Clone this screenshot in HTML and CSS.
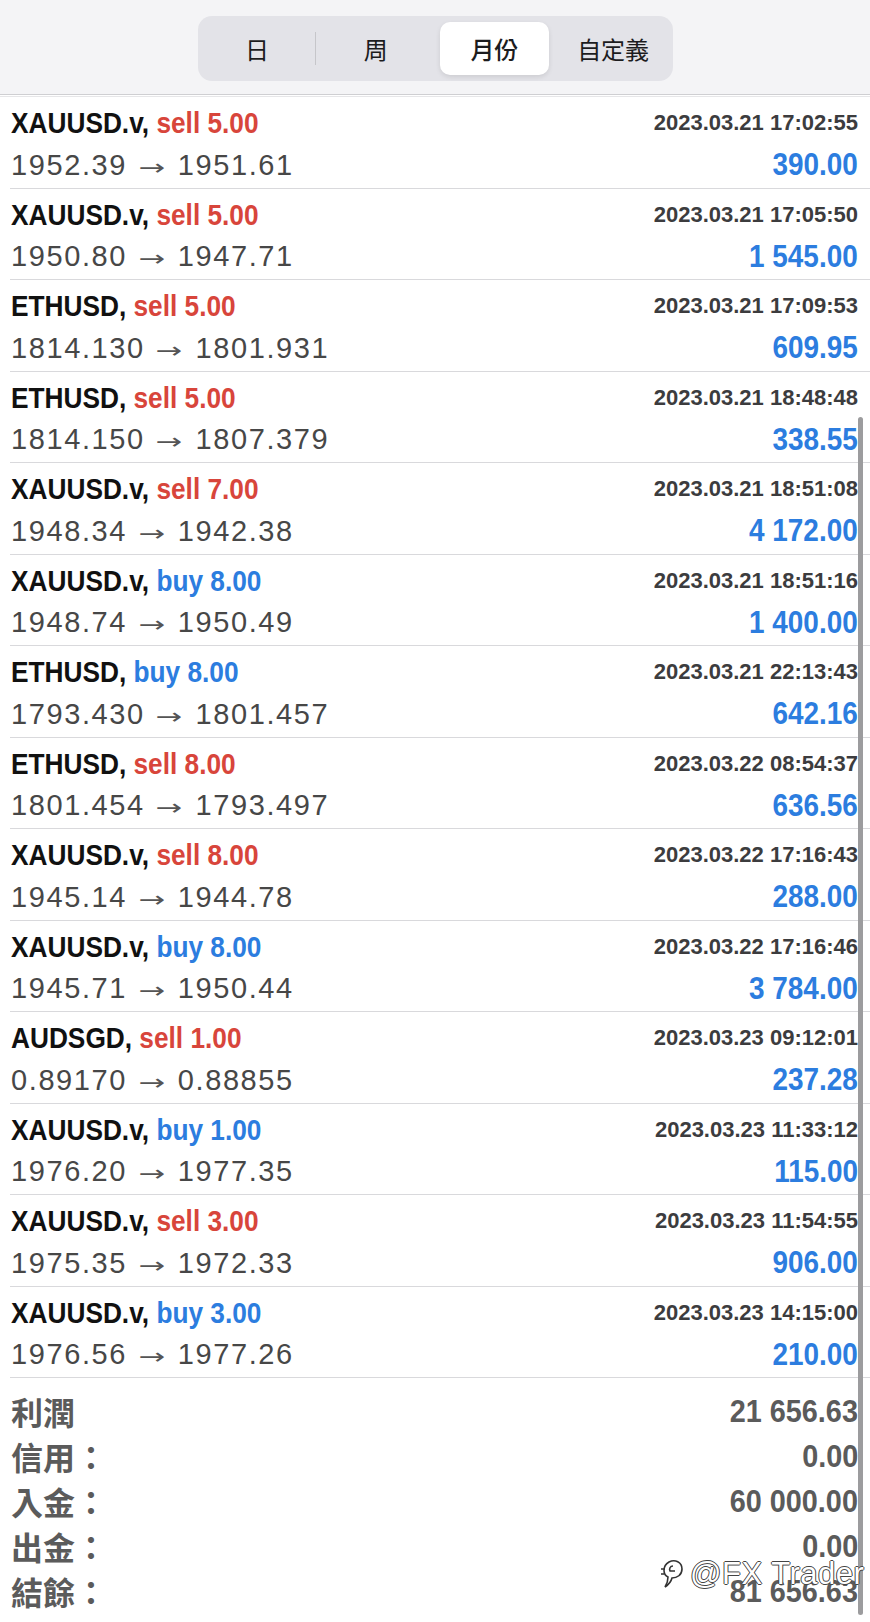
FILE: index.html
```html
<!DOCTYPE html>
<html>
<head>
    <title>交易歷史</title>
    <link rel="stylesheet" href="styles.css">
</head>
<body>
<div class="screen">
    <header class="topbar">
        <div class="segmented">
            <div class="segment">日</div>
            <div class="segment">周</div>
            <div class="segment active">月份</div>
            <div class="segment">自定義</div>
        </div>
    </header>

    <main class="deals">
        <div class="deal">
            <div class="line"><span class="symbol">XAUUSD.v, <span class="sell">sell 5.00</span></span><span class="time">2023.03.21 17:02:55</span></div>
            <div class="line"><span class="prices">1952.39 <span class="arrow">→</span> 1951.61</span><span class="profit">390.00</span></div>
        </div>
        <div class="deal">
            <div class="line"><span class="symbol">XAUUSD.v, <span class="sell">sell 5.00</span></span><span class="time">2023.03.21 17:05:50</span></div>
            <div class="line"><span class="prices">1950.80 <span class="arrow">→</span> 1947.71</span><span class="profit">1&nbsp;545.00</span></div>
        </div>
        <div class="deal">
            <div class="line"><span class="symbol">ETHUSD, <span class="sell">sell 5.00</span></span><span class="time">2023.03.21 17:09:53</span></div>
            <div class="line"><span class="prices">1814.130 <span class="arrow">→</span> 1801.931</span><span class="profit">609.95</span></div>
        </div>
        <div class="deal">
            <div class="line"><span class="symbol">ETHUSD, <span class="sell">sell 5.00</span></span><span class="time">2023.03.21 18:48:48</span></div>
            <div class="line"><span class="prices">1814.150 <span class="arrow">→</span> 1807.379</span><span class="profit">338.55</span></div>
        </div>
        <div class="deal">
            <div class="line"><span class="symbol">XAUUSD.v, <span class="sell">sell 7.00</span></span><span class="time">2023.03.21 18:51:08</span></div>
            <div class="line"><span class="prices">1948.34 <span class="arrow">→</span> 1942.38</span><span class="profit">4&nbsp;172.00</span></div>
        </div>
        <div class="deal">
            <div class="line"><span class="symbol">XAUUSD.v, <span class="buy">buy 8.00</span></span><span class="time">2023.03.21 18:51:16</span></div>
            <div class="line"><span class="prices">1948.74 <span class="arrow">→</span> 1950.49</span><span class="profit">1&nbsp;400.00</span></div>
        </div>
        <div class="deal">
            <div class="line"><span class="symbol">ETHUSD, <span class="buy">buy 8.00</span></span><span class="time">2023.03.21 22:13:43</span></div>
            <div class="line"><span class="prices">1793.430 <span class="arrow">→</span> 1801.457</span><span class="profit">642.16</span></div>
        </div>
        <div class="deal">
            <div class="line"><span class="symbol">ETHUSD, <span class="sell">sell 8.00</span></span><span class="time">2023.03.22 08:54:37</span></div>
            <div class="line"><span class="prices">1801.454 <span class="arrow">→</span> 1793.497</span><span class="profit">636.56</span></div>
        </div>
        <div class="deal">
            <div class="line"><span class="symbol">XAUUSD.v, <span class="sell">sell 8.00</span></span><span class="time">2023.03.22 17:16:43</span></div>
            <div class="line"><span class="prices">1945.14 <span class="arrow">→</span> 1944.78</span><span class="profit">288.00</span></div>
        </div>
        <div class="deal">
            <div class="line"><span class="symbol">XAUUSD.v, <span class="buy">buy 8.00</span></span><span class="time">2023.03.22 17:16:46</span></div>
            <div class="line"><span class="prices">1945.71 <span class="arrow">→</span> 1950.44</span><span class="profit">3&nbsp;784.00</span></div>
        </div>
        <div class="deal">
            <div class="line"><span class="symbol">AUDSGD, <span class="sell">sell 1.00</span></span><span class="time">2023.03.23 09:12:01</span></div>
            <div class="line"><span class="prices">0.89170 <span class="arrow">→</span> 0.88855</span><span class="profit">237.28</span></div>
        </div>
        <div class="deal">
            <div class="line"><span class="symbol">XAUUSD.v, <span class="buy">buy 1.00</span></span><span class="time">2023.03.23 11:33:12</span></div>
            <div class="line"><span class="prices">1976.20 <span class="arrow">→</span> 1977.35</span><span class="profit">115.00</span></div>
        </div>
        <div class="deal">
            <div class="line"><span class="symbol">XAUUSD.v, <span class="sell">sell 3.00</span></span><span class="time">2023.03.23 11:54:55</span></div>
            <div class="line"><span class="prices">1975.35 <span class="arrow">→</span> 1972.33</span><span class="profit">906.00</span></div>
        </div>
        <div class="deal">
            <div class="line"><span class="symbol">XAUUSD.v, <span class="buy">buy 3.00</span></span><span class="time">2023.03.23 14:15:00</span></div>
            <div class="line"><span class="prices">1976.56 <span class="arrow">→</span> 1977.26</span><span class="profit">210.00</span></div>
        </div>

        <div class="summary">
            <div class="sum-row"><span class="sum-label">利潤</span><span class="sum-value">21&nbsp;656.63</span></div>
            <div class="sum-row"><span class="sum-label">信用：</span><span class="sum-value">0.00</span></div>
            <div class="sum-row"><span class="sum-label">入金：</span><span class="sum-value">60&nbsp;000.00</span></div>
            <div class="sum-row"><span class="sum-label">出金：</span><span class="sum-value">0.00</span></div>
            <div class="sum-row"><span class="sum-label">結餘：</span><span class="sum-value">81&nbsp;656.63</span></div>
        </div>
    </main>

    <div class="scrollbar"></div>

    <div class="watermark">
        <svg class="wm-logo" viewBox="0 0 24 32" width="24" height="32">
            <path d="M9 4 C15 1 22 4 22 11 C22 17 17 20 12 20 C11 24 8 27 5 29 C7 26 8 22 8 19 C3 17 2 8 9 4 Z" fill="#fff" stroke="#333" stroke-width="1.6"/>
            <path d="M13 8 C10 8 9 11 10 13 L15 13" fill="none" stroke="#333" stroke-width="1.6"/>
            <path d="M1 11 L5 11 M1 16 L4 16" stroke="#333" stroke-width="1.4"/>
        </svg>
        <span class="wm-text">@FX Trader</span>
    </div>
</div>
</body>
</html>
```

FILE: styles.css
```css
:root {
    --header-bg: #f4f4f6;
    --segment-bg: #e3e3e8;
    --divider-color: #d9d9dc;
    --title-color: #111111;
    --price-color: #474747;
    --time-color: #3c3c3e;
    --sell-color: #d8453b;
    --buy-color: #2c7ddf;
    --summary-color: #5b5b5b;
}

body {
    margin: 0;
    background: #ffffff;
    font-family: "Liberation Sans", Arial, sans-serif;
}

.screen {
    position: relative;
    width: 870px;
    height: 1622px;
    overflow: hidden;
    background: #ffffff;
}

.topbar {
    height: 95px;
    background: var(--header-bg);
    border-bottom: 1px solid #cfcfd2;
    box-sizing: border-box;
    padding-top: 16px;
    display: flex;
    justify-content: center;
}

.segmented {
    width: 475px;
    height: 65px;
    padding: 6px 5px;
    box-sizing: border-box;
    background: var(--segment-bg);
    border-radius: 14px;
    display: grid;
    grid-template-columns: repeat(4, 1fr);
    column-gap: 10px;
}

.segment {
    position: relative;
    display: flex;
    align-items: center;
    justify-content: center;
    font-family: "Noto Sans CJK TC", "Noto Sans CJK SC", sans-serif;
    font-size: 24px;
    color: #1c1c1e;
    border-radius: 10px;
}

.segment:first-child::after {
    content: "";
    position: absolute;
    right: -5px;
    top: 10px;
    bottom: 10px;
    width: 1px;
    background: #c6c6ca;
}

.segment.active {
    background: #ffffff;
    font-weight: 500;
    box-shadow: 0 2px 5px rgba(0, 0, 0, 0.1);
}

.deals {
    margin-top: 1px;
    border-top: 1px solid #e6e6e8;
}

.deal {
    margin-left: 10px;
    padding: 5px 12px 1.5px 1px;
    border-bottom: 1px solid var(--divider-color);
}

.line {
    display: flex;
    justify-content: space-between;
    align-items: center;
    height: 42px;
}

.symbol {
    display: inline-block;
    font-weight: 700;
    font-size: 30px;
    color: var(--title-color);
    transform: scaleX(0.875);
    transform-origin: left center;
    white-space: nowrap;
}

.sell { color: var(--sell-color); }
.buy { color: var(--buy-color); }

.time {
    font-weight: 700;
    font-size: 22px;
    color: var(--time-color);
}

.prices {
    font-size: 29px;
    letter-spacing: 1.6px;
    color: var(--price-color);
    white-space: nowrap;
}

.arrow {
    display: inline-block;
    font-family: "DejaVu Sans", sans-serif;
    font-size: 22px;
    letter-spacing: 0;
    margin: 0 7px 0 6px;
    color: #555555;
    transform: scaleX(1.45);
}

.profit {
    display: inline-block;
    font-weight: 700;
    font-size: 31px;
    color: var(--buy-color);
    transform: scaleX(0.9);
    transform-origin: right center;
    white-space: nowrap;
}

.summary {
    padding: 11px 12px 0 11px;
}

.sum-row {
    display: flex;
    justify-content: space-between;
    align-items: center;
    height: 45px;
}

.sum-label {
    font-family: "Noto Sans CJK TC", "Noto Sans CJK SC", sans-serif;
    font-weight: 700;
    font-size: 32px;
    line-height: 45px;
    color: var(--summary-color);
}

.sum-value {
    display: inline-block;
    font-weight: 700;
    font-size: 31px;
    color: var(--summary-color);
    transform: scaleX(0.93);
    transform-origin: right center;
    white-space: nowrap;
}

.scrollbar {
    position: absolute;
    left: 858px;
    top: 417px;
    width: 5px;
    height: 1198px;
    border-radius: 3px;
    background: #9c9c9e;
}

.watermark {
    position: absolute;
    left: 660px;
    top: 1556px;
    display: flex;
    align-items: center;
    gap: 6px;
}

.wm-text {
    font-family: "Liberation Sans", sans-serif;
    font-weight: 400;
    font-size: 31px;
    letter-spacing: 0.5px;
    color: #ffffff;
    text-shadow: 1px 0 0 #444, -1px 0 0 #444, 0 1px 0 #444, 0 -1px 0 #444;
}
```
